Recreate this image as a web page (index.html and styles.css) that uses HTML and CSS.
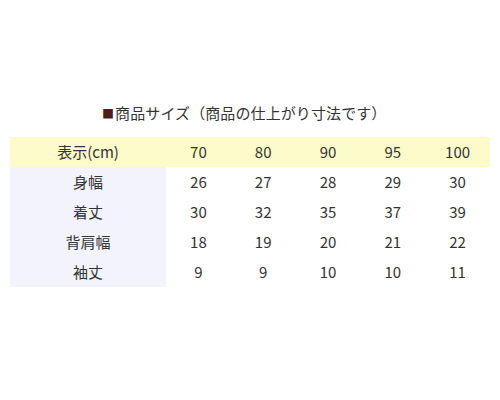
FILE: index.html
```html
<!DOCTYPE html>
<html lang="ja">
<head>
<meta charset="utf-8">
<link rel="stylesheet" href="styles.css">
</head>
<body>
<div class="page">
  <h1 class="title"><span class="sq">■</span>商品サイズ（商品の仕上がり寸法です）</h1>
  <table class="size">
    <tr class="head"><th>表示(cm)</th><td>70</td><td>80</td><td>90</td><td>95</td><td>100</td></tr>
    <tr><th>身幅</th><td>26</td><td>27</td><td>28</td><td>29</td><td>30</td></tr>
    <tr><th>着丈</th><td>30</td><td>32</td><td>35</td><td>37</td><td>39</td></tr>
    <tr><th>背肩幅</th><td>18</td><td>19</td><td>20</td><td>21</td><td>22</td></tr>
    <tr><th>袖丈</th><td>9</td><td>9</td><td>10</td><td>10</td><td>11</td></tr>
  </table>
</div>
</body>
</html>
```
FILE: styles.css
```css
html, body { margin: 0; padding: 0; background: #fff; }
body { font-family: "Noto Sans CJK JP", "Noto Sans", sans-serif; color: #333; }
.page { width: 500px; height: 400px; padding: 102px 10px 0; box-sizing: border-box; }
.title { margin: 0 0 12px 92px; font-size: 15px; font-weight: normal; line-height: 22px; color: #333; letter-spacing: 0.1px; }
.sq { color: #4a1c1c; font-size: 12px; margin-right: 1px; }
.size { border-collapse: collapse; width: 480px; table-layout: fixed; }
.size th, .size td { height: 30px; padding: 0; text-align: center; font-size: 15px; font-weight: normal; line-height: 30px; }
.size th { width: 156px; background: #f2f3fc; }
.size .head th, .size .head td { background: #fdfbc9; }
```
